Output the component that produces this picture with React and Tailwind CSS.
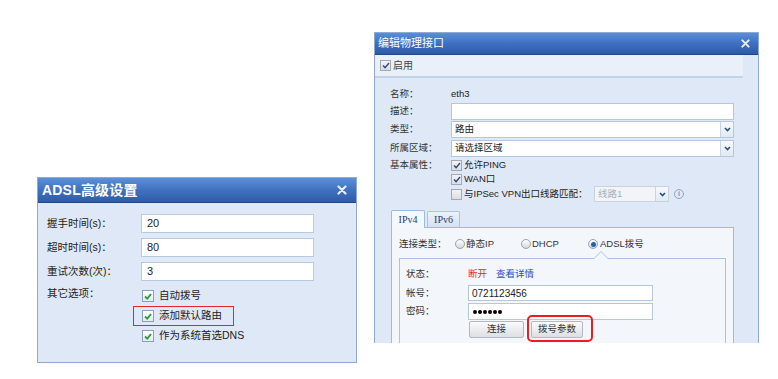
import React from 'react';

const SANS = "font-['Liberation_Sans','Noto_Sans_CJK_SC',sans-serif]";

function CloseX({ size = 9 }) {
  return (
    <svg width={size} height={size} viewBox="0 0 10 10">
      <path d="M1.5 1.5 L8.5 8.5 M8.5 1.5 L1.5 8.5" stroke="#e8eef8" strokeWidth="2.2" strokeLinecap="round" />
    </svg>
  );
}

function GreenBox({ checked = true }) {
  return (
    <span className="w-[12px] h-[12px] shrink-0 border border-[#8a9fbd] bg-linear-to-b from-white to-[#e3e9f2] flex items-center justify-center">
      {checked && (
        <svg width="8" height="7" viewBox="0 0 8 7">
          <path d="M1 3.5 L3.2 5.6 L7 1.2" stroke="#2f9b3a" strokeWidth="1.8" fill="none" />
        </svg>
      )}
    </span>
  );
}

function GrayBox({ checked = true }) {
  return (
    <span className="w-[11px] h-[11px] shrink-0 border border-[#a3a9b3] bg-linear-to-b from-[#f4f4f4] to-[#dcdde0] flex items-center justify-center">
      {checked && (
        <svg width="8" height="7" viewBox="0 0 8 7">
          <path d="M1 3.4 L3.1 5.6 L7 1" stroke="#2a4a86" strokeWidth="1.4" fill="none" />
        </svg>
      )}
    </span>
  );
}

function Radio({ on }) {
  return (
    <span className="w-[10px] h-[10px] shrink-0 rounded-full border border-[#9aa3b0] bg-linear-to-b from-white to-[#d4d8de] flex items-center justify-center">
      {on && <span className="w-[5px] h-[5px] rounded-full bg-[#1d64b4]" />}
    </span>
  );
}

function Chevron() {
  return (
    <svg width="7" height="5" viewBox="0 0 7 5">
      <path d="M1 1 L3.5 3.5 L6 1" stroke="#2b4d86" strokeWidth="1.6" fill="none" />
    </svg>
  );
}

function Select({ value, className, disabled }) {
  return (
    <div className={`flex border ${disabled ? 'border-[#c9d3e0] bg-[#f2f4f7]' : 'border-[#b5c7df] bg-white'} ${className}`}>
      <div className={`flex-1 flex items-center pl-[3px] ${disabled ? 'text-[#a8afba]' : 'text-[#222]'}`}>{value}</div>
      <div className="w-[13px] border-l border-[#c7d4e6] bg-linear-to-b from-[#f7f9fc] to-[#e2e9f3] flex items-center justify-center">
        <Chevron />
      </div>
    </div>
  );
}

function AdslDialog() {
  const rows = [
    ['握手时间(s)：', '20'],
    ['超时时间(s)：', '80'],
    ['重试次数(次)：', '3'],
  ];
  return (
    <div className="ml-[37px] mt-[177px] w-[320px] h-[186px] shrink-0 border border-[#8eaad2] bg-[#dfe8f6] flex flex-col text-[10.5px] text-[#1c1c1c]">
      <div className="h-[25px] shrink-0 bg-linear-to-b from-[#5c90d8] via-[#4071c0] to-[#2e5ca9] border-b border-[#22468a] flex items-center justify-between pl-[4px] pr-[9px]">
        <span className="text-white font-bold text-[14px] tracking-[0.2px]">ADSL高级设置</span>
        <CloseX size={10} />
      </div>
      <div className="pt-[11px] pl-[9px] flex flex-col gap-[5px]">
        {rows.map(([label, val]) => (
          <div key={label} className="flex items-center h-[19px]">
            <div className="w-[94px]">{label}</div>
            <div className="w-[173px] h-[19px] border border-[#b9c9de] bg-white flex items-center pl-[5px] text-[11px]">{val}</div>
          </div>
        ))}
        <div className="flex">
          <div className="w-[94px] leading-[14px]">其它选项：</div>
          <div className="ml-[1px] flex flex-col">
            <div className="h-[20px] flex items-center gap-[5px]">
              <GreenBox />
              <span>自动拨号</span>
            </div>
            <div className="h-[20px] w-[101px] -ml-[9px] pl-[8px] border border-[#e3262a] flex items-center gap-[5px]">
              <GreenBox />
              <span>添加默认路由</span>
            </div>
            <div className="h-[20px] flex items-center gap-[5px]">
              <GreenBox />
              <span>作为系统首选DNS</span>
            </div>
          </div>
        </div>
      </div>
    </div>
  );
}

function Label({ children, w = 'w-[61px]' }) {
  return <div className={`${w} shrink-0 text-[#333]`}>{children}</div>;
}

function InterfaceDialog() {
  return (
    <div className="ml-[17px] mt-[32px] w-[385px] h-[311px] shrink-0 border-x border-t border-[#8eaad2] bg-[#dfe8f6] flex flex-col overflow-hidden text-[9.5px] text-[#222]">
      <div className="h-[22px] shrink-0 bg-linear-to-b from-[#5a8ed7] via-[#3f70c0] to-[#2d5aa6] border-b border-[#22468a] flex items-center justify-between pl-[3px] pr-[8px]">
        <span className="text-white text-[11px]">编辑物理接口</span>
        <CloseX size={9} />
      </div>

      <div className="h-[23px] shrink-0 mr-[15px] bg-[#e9f0fa] border-b-2 border-[#c4d3e8] flex items-center pl-[5px] gap-[2px] text-[#444]">
        <GrayBox />
        <span className="text-[10px]">启用</span>
      </div>

      <div className="pl-[15px] pt-[8px] flex flex-col gap-[1px]">
        <div className="h-[16px] flex items-center">
          <Label>名称：</Label>
          <span>eth3</span>
        </div>
        <div className="h-[17px] flex items-center">
          <Label>描述：</Label>
          <div className="w-[283px] h-[17px] border border-[#b5c7df] bg-white" />
        </div>
        <div className="h-[17px] flex items-center">
          <Label>类型：</Label>
          <Select value="路由" className="w-[283px] h-[17px]" />
        </div>
        <div className="h-[17px] mt-[1px] flex items-center">
          <Label>所属区域：</Label>
          <Select value="请选择区域" className="w-[283px] h-[17px]" />
        </div>
        <div className="flex">
          <Label>
            <div className="h-[14px] flex items-center">基本属性：</div>
          </Label>
          <div className="flex flex-col">
            <div className="h-[14px] flex items-center gap-[2px]">
              <GrayBox />
              <span>允许PING</span>
            </div>
            <div className="h-[14px] flex items-center gap-[2px]">
              <GrayBox />
              <span>WAN口</span>
            </div>
            <div className="h-[16px] flex items-center gap-[2px]">
              <GrayBox checked={false} />
              <span className="w-[128px]">与IPSec VPN出口线路匹配：</span>
              <Select value="线路1" disabled className="w-[75px] h-[16px]" />
              <span className="ml-[3px] w-[10px] h-[10px] rounded-full border border-[#8fa5c6] text-[#7f95b8] text-[7px] font-bold flex items-center justify-center">i</span>
            </div>
          </div>
        </div>
      </div>

      <div className="mt-[8px] ml-[16px] mr-[24px] flex flex-col flex-1">
        <div className="flex items-end gap-[2px] h-[17px] font-['Liberation_Serif','Noto_Sans_CJK_SC',serif] text-[10px]">
          <div className="w-[34px] h-[18px] -mb-[1px] relative z-10 border border-b-0 border-[#99bbe8] rounded-t-[2px] bg-[#f4f8fd] flex items-center justify-center text-[#1d3a6e]">IPv4</div>
          <div className="w-[33px] h-[16px] border border-b-0 border-[#a9c3e6] rounded-t-[2px] bg-linear-to-b from-[#edf2fa] to-[#d4e1f3] flex items-center justify-center text-[#1d3a6e]">IPv6</div>
        </div>
        <div className="flex-1 border border-[#99bbe8] bg-[#f3f7fc] pt-[8px] px-[7px]">
          <div className="h-[16px] flex items-center">
            <Label w="w-[56px]">连接类型：</Label>
            <div className="w-[66px] flex items-center gap-[1px]">
              <Radio />
              <span className="text-[#333]">静态IP</span>
            </div>
            <div className="w-[67px] flex items-center gap-[1px]">
              <Radio />
              <span className="text-[#333]">DHCP</span>
            </div>
            <div className="flex items-center gap-[2px]">
              <Radio on />
              <span className="text-[#333]">ADSL拨号</span>
            </div>
          </div>

          <div className="mt-[6px] relative border border-[#aac2e2] bg-[#f3f7fc] pt-[7px] pl-[6px] h-[100px]">
            <svg className="absolute -top-[8px] left-[193px]" width="16" height="9" viewBox="0 0 16 9">
              <path d="M0 8.5 L8 0.5 L16 8.5" fill="#f3f7fc" stroke="#aac2e2" strokeWidth="1" />
            </svg>
            <div className="h-[16px] flex items-center">
              <Label w="w-[62px]">状态：</Label>
              <span className="text-[#e8271f]">断开</span>
              <span className="ml-[9px] text-[#1f4ccc]">查看详情</span>
            </div>
            <div className="mt-[3px] h-[16px] flex items-center">
              <Label w="w-[62px]">帐号：</Label>
              <div className="w-[185px] h-[16px] border border-[#b5c7df] bg-white flex items-center pl-[3px] text-[10px]">0721123456</div>
            </div>
            <div className="mt-[2px] h-[17px] flex items-center">
              <Label w="w-[62px]">密码：</Label>
              <div className="w-[185px] h-[17px] border border-[#b5c7df] bg-white flex items-center pl-[4px] gap-[1px]">
                {[0, 1, 2, 3, 4, 5].map((i) => (
                  <span key={i} className="w-[4px] h-[4px] rounded-full bg-black" />
                ))}
              </div>
            </div>
            <div className="mt-[1px] h-[17px] flex items-center pl-[63px]">
              <div className="w-[55px] h-[17px] border border-[#b3b8c0] rounded-[2px] bg-linear-to-b from-[#fbfbfb] to-[#dcdfe4] flex items-center justify-center text-[#333]">连接</div>
              <div className="relative ml-[7px]">
                <div className="w-[52px] h-[17px] border border-[#b3b8c0] rounded-[2px] bg-linear-to-b from-[#fbfbfb] to-[#dcdfe4] flex items-center justify-center text-[#333]">拨号参数</div>
                <div className="absolute -left-[4px] -top-[6px] w-[66px] h-[27px] rounded-[5px] border-2 border-[#ea1c1c]" />
              </div>
            </div>
          </div>
        </div>
      </div>
    </div>
  );
}

export default function App() {
  return (
    <div className={`w-[778px] h-[379px] bg-white flex items-start overflow-hidden ${SANS}`}>
      <AdslDialog />
      <InterfaceDialog />
    </div>
  );
}
